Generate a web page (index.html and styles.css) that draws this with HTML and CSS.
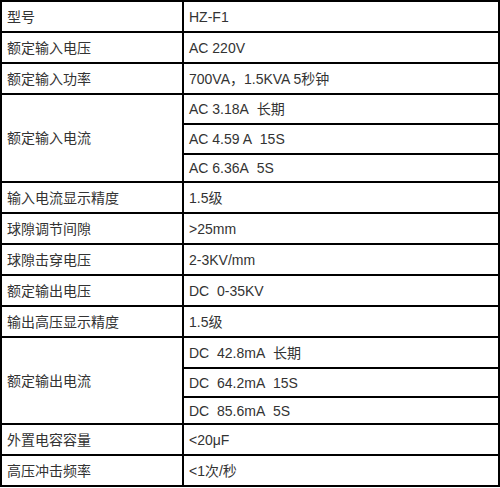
FILE: index.html
```html
<!DOCTYPE html>
<html lang="zh">
<head>
<meta charset="utf-8">
<link rel="stylesheet" href="styles.css">
</head>
<body>
<table class="spec">
  <tr><td class="k">型号</td><td class="v">HZ-F1</td></tr>
  <tr><td class="k">额定输入电压</td><td class="v">AC 220V</td></tr>
  <tr><td class="k">额定输入功率</td><td class="v">700VA，1.5KVA 5秒钟</td></tr>
  <tr class="h28"><td class="k" rowspan="3">额定输入电流</td><td class="v">AC 3.18A&nbsp; 长期</td></tr>
  <tr class="h28"><td class="v">AC 4.59 A&nbsp; 15S</td></tr>
  <tr class="h26"><td class="v">AC 6.36A&nbsp; 5S</td></tr>
  <tr><td class="k">输入电流显示精度</td><td class="v">1.5级</td></tr>
  <tr><td class="k">球隙调节间隙</td><td class="v">&gt;25mm</td></tr>
  <tr><td class="k">球隙击穿电压</td><td class="v">2-3KV/mm</td></tr>
  <tr><td class="k">额定输出电压</td><td class="v">DC&nbsp; 0-35KV</td></tr>
  <tr><td class="k">输出高压显示精度</td><td class="v">1.5级</td></tr>
  <tr><td class="k" rowspan="3">额定输出电流</td><td class="v">DC&nbsp; 42.8mA&nbsp; 长期</td></tr>
  <tr class="h27"><td class="v">DC&nbsp; 64.2mA&nbsp; 15S</td></tr>
  <tr class="h25"><td class="v">DC&nbsp; 85.6mA&nbsp; 5S</td></tr>
  <tr><td class="k">外置电容容量</td><td class="v">&lt;20μF</td></tr>
  <tr><td class="k">高压冲击频率</td><td class="v">&lt;1次/秒</td></tr>
</table>
</body>
</html>
```
FILE: styles.css
```css
html, body {
  margin: 0;
  padding: 0;
  background: #fff;
}
.spec {
  width: 500px;
  border: 1px solid #000;
  border-spacing: 0;
  font-family: "Liberation Sans", Arial, "Noto Sans CJK SC", sans-serif;
  font-size: 14px;
  color: #333;
}
.spec td {
  border: 1px solid #000;
  padding: 0 5px;
  height: 29px;
  line-height: 20px;
  vertical-align: middle;
  text-align: left;
}
.spec td.k {
  width: 170px;
}
.spec .h28 td.v { height: 28px; }
.spec .h27 td.v { height: 27px; }
.spec .h26 td.v { height: 26px; }
.spec .h25 td.v { height: 25px; }
```
